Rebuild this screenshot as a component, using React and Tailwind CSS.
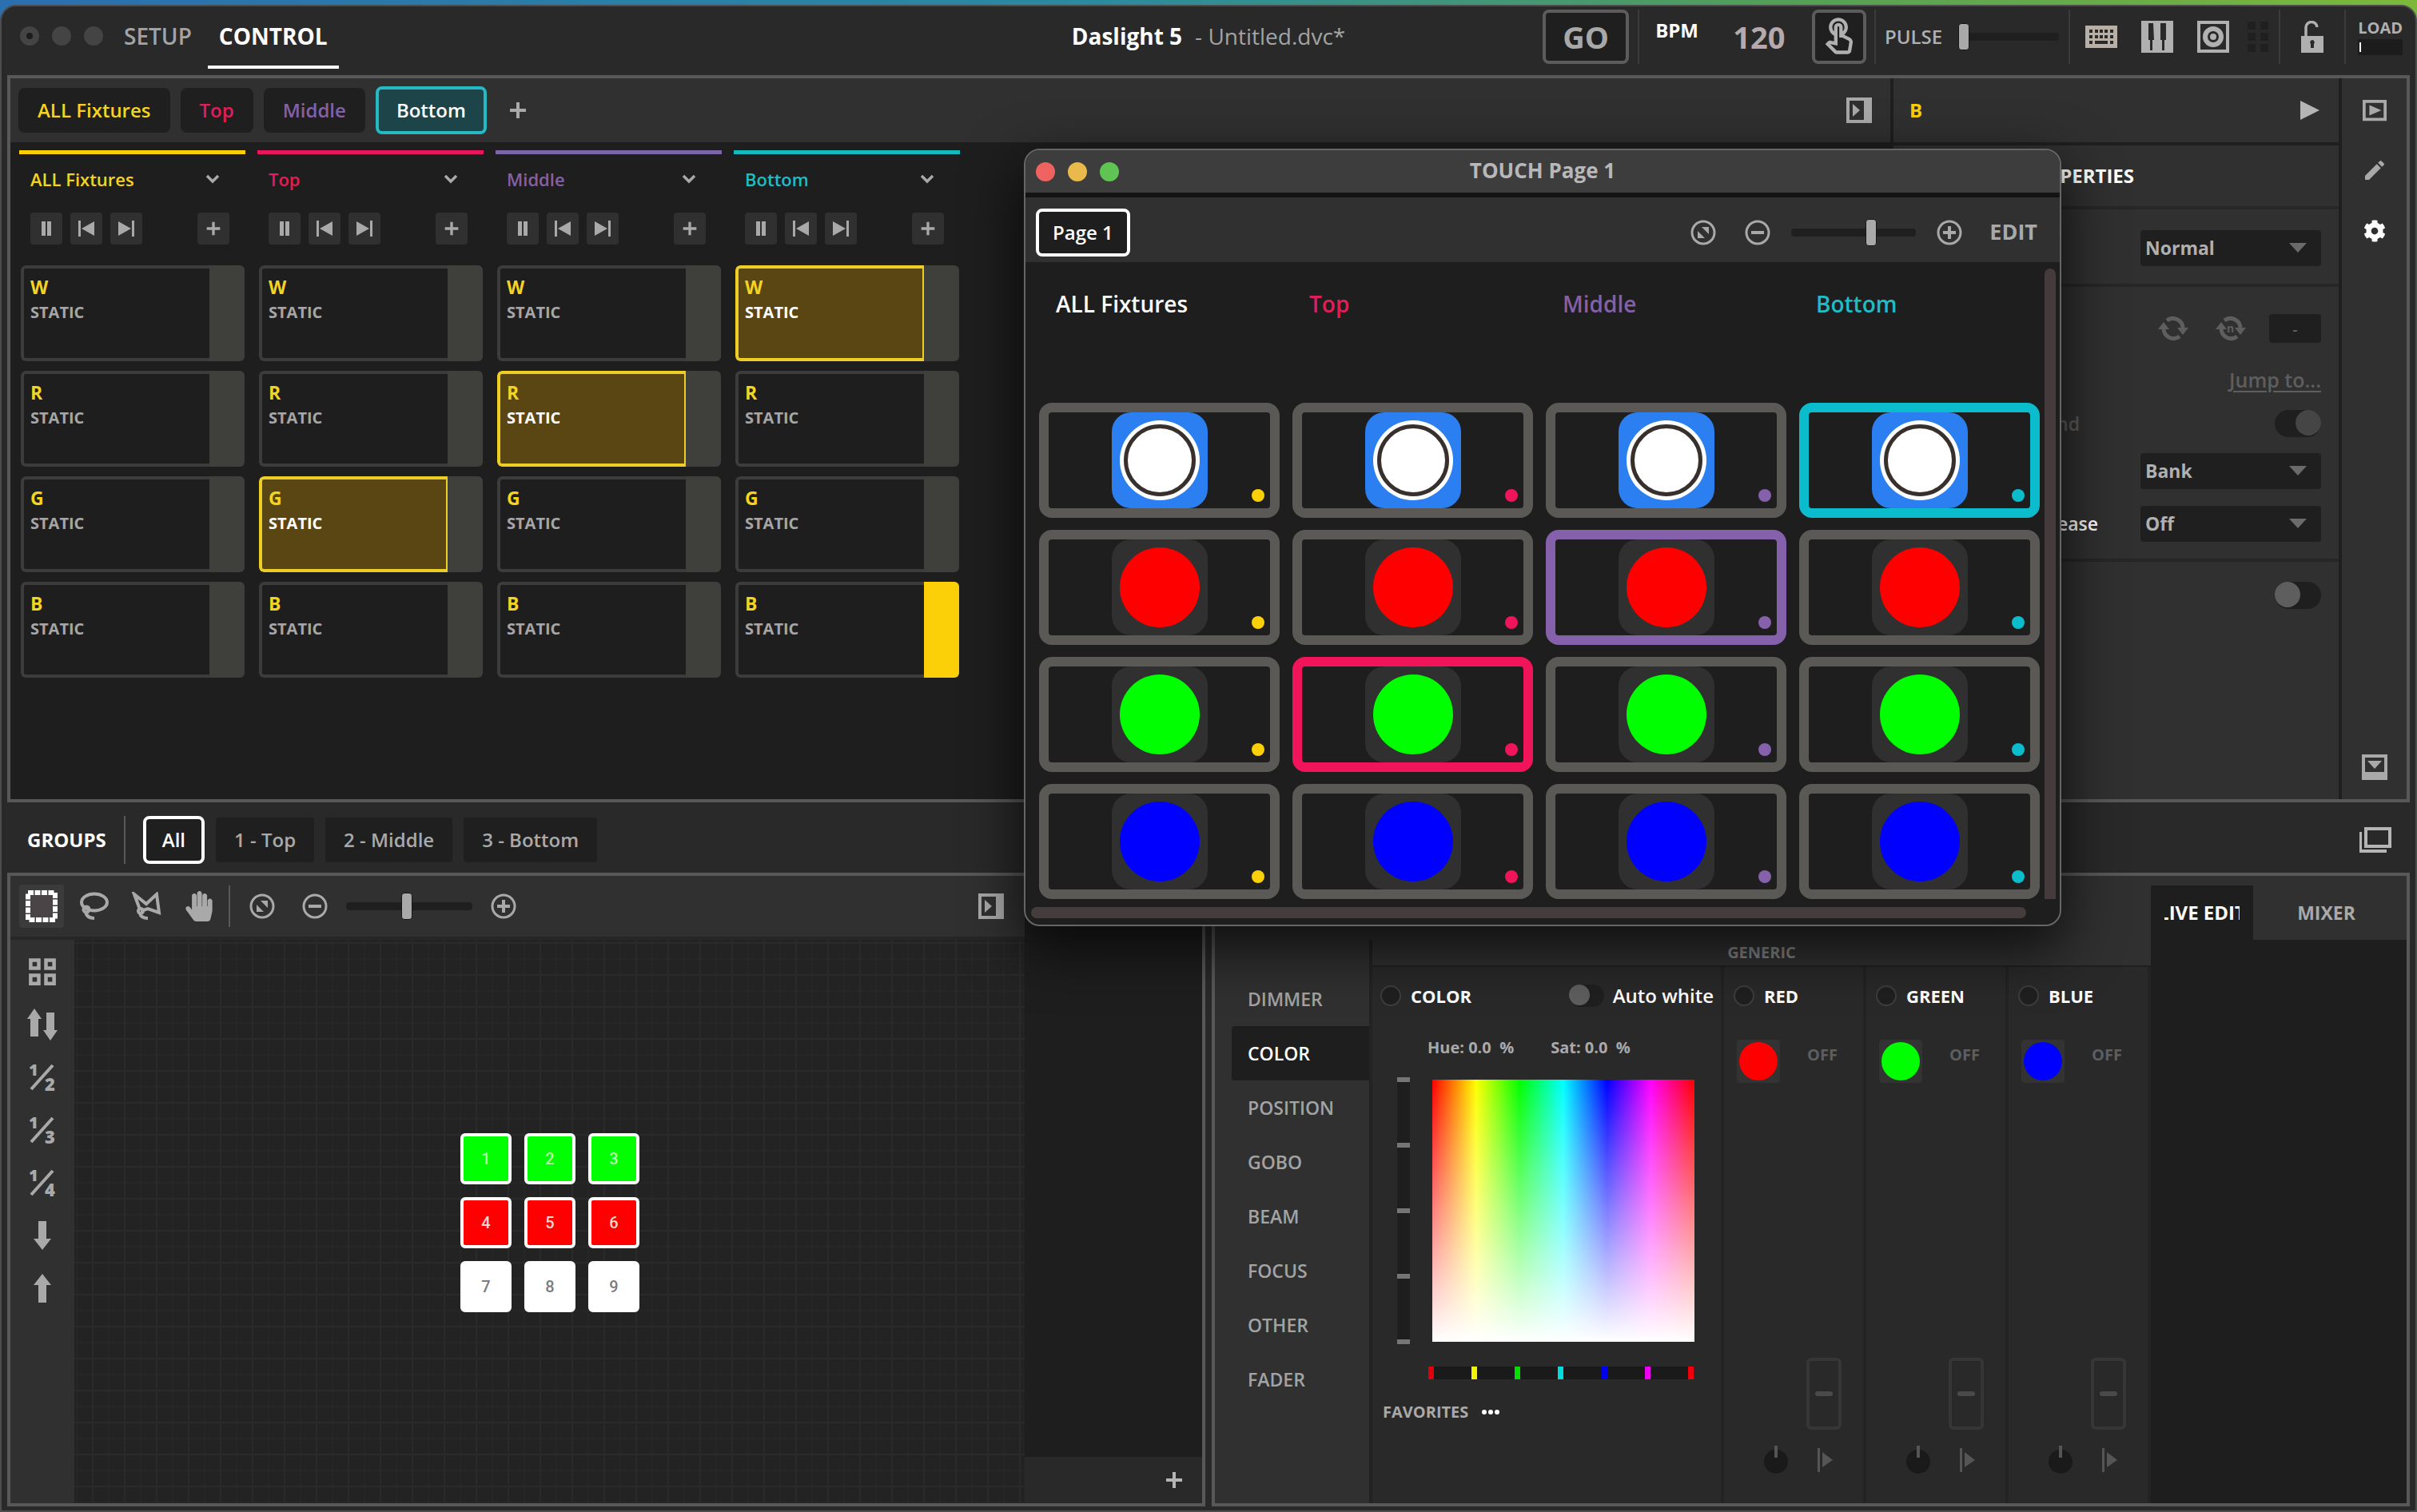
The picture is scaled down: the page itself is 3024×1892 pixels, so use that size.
import React, { useState } from 'react';
import clsx from 'clsx';
import { FaCog, FaHandPaper } from 'react-icons/fa';
import { MdEdit, MdOutlineTouchApp } from 'react-icons/md';

const BANKS = [
  { name: 'ALL Fixtures', text: 'text-[#f5d321]', bar: 'bg-[#fbd008]', dot: 'bg-[#fbd008]', ring: 'border-[#fbd008]' },
  { name: 'Top', text: 'text-[#e01e5a]', bar: 'bg-[#e8175d]', dot: 'bg-[#f0145a]', ring: 'border-[#f0145a]' },
  { name: 'Middle', text: 'text-[#8360a8]', bar: 'bg-[#7d66a8]', dot: 'bg-[#8560ab]', ring: 'border-[#8560ab]' },
  { name: 'Bottom', text: 'text-[#1fbcc4]', bar: 'bg-[#14b8bd]', dot: 'bg-[#0bbccd]', ring: 'border-[#0bbccd]' },
];

const SCENES = ['W', 'R', 'G', 'B'];

// scene index that is playing in each bank
const PLAYING = [-1, 2, 1, 0];

const SCENE_COLORS = ['bg-white', 'bg-[#ff0000]', 'bg-[#00ff00]', 'bg-[#0000ff]'];

const FIXTURES = [
  { id: 1, style: 'bg-[#00ff00] text-[#b4ffb4]' },
  { id: 2, style: 'bg-[#00ff00] text-[#b4ffb4]' },
  { id: 3, style: 'bg-[#00ff00] text-[#b4ffb4]' },
  { id: 4, style: 'bg-[#ff0000] text-[#ffd5d0]' },
  { id: 5, style: 'bg-[#ff0000] text-[#ffd5d0]' },
  { id: 6, style: 'bg-[#ff0000] text-[#ffd5d0]' },
  { id: 7, style: 'bg-white text-[#7c7c7c]' },
  { id: 8, style: 'bg-white text-[#7c7c7c]' },
  { id: 9, style: 'bg-white text-[#7c7c7c]' },
];

const CATEGORIES = ['DIMMER', 'COLOR', 'POSITION', 'GOBO', 'BEAM', 'FOCUS', 'OTHER', 'FADER'];

const CHANNELS = [
  { name: 'RED', color: 'bg-[#ff0000]' },
  { name: 'GREEN', color: 'bg-[#00ff00]' },
  { name: 'BLUE', color: 'bg-[#0000ff]' },
];

const HUE_TICKS = [
  'bg-[#e0000b]', 'bg-[#f4f400]', 'bg-[#00e000]', 'bg-[#00dcdc]',
  'bg-[#0000f0]', 'bg-[#f000f0]', 'bg-[#f0000b]',
];

/* ---------- Icons ---------- */

function Svg({ w = 32, h = w, box = '0 0 32 32', children }) {
  return (
    <svg width={w} height={h} viewBox={box} fill="currentColor" aria-hidden="true" className="flex-shrink-0">
      {children}
    </svg>
  );
}

const PlusIcon = ({ size = 24 }) => (
  <Svg w={size} box="0 0 24 24"><path d="M10 2h4v8h8v4h-8v8h-4v-8H2v-4h8z" /></Svg>
);

const PauseIcon = () => (
  <Svg w={24} box="0 0 24 24"><path d="M6 3h5v18H6zM13 3h5v18h-5z" /></Svg>
);

const PrevIcon = () => (
  <Svg w={24} box="0 0 24 24"><path d="M2 2h3v20H2zM22 3v18L6 12z" /></Svg>
);

const NextIcon = () => (
  <Svg w={24} box="0 0 24 24"><path d="M19 2h3v20h-3zM2 3v18l16-9z" /></Svg>
);

const ChevronIcon = () => (
  <Svg w={18} h={12} box="0 0 18 12">
    <path d="M2 2l7 7 7-7" fill="none" stroke="currentColor" strokeWidth="3.5" />
  </Svg>
);

const PanelRightIcon = () => (
  <Svg>
    <path fillRule="evenodd" d="M0 0h32v32H0zM4 4v24h18V4z" />
    <path d="M8 8l9 8-9 8z" />
  </Svg>
);

const PanelBottomIcon = () => (
  <Svg>
    <path fillRule="evenodd" d="M0 0h32v32H0zM4 4v18h24V4z" />
    <path d="M7 8h18l-9 10z" />
  </Svg>
);

const PlayBoxIcon = () => (
  <Svg w={30}>
    <path fillRule="evenodd" d="M0 2h32v28H0zM4 6v20h24V6z" />
    <path d="M9 9l16 7-16 7z" />
  </Svg>
);

const WindowsIcon = () => (
  <Svg w={40} h={32} box="0 0 40 32">
    <path fillRule="evenodd" d="M6 0h34v26H6zM10 4v18h26V4z" />
    <path d="M0 6h3v22h31v4H0z" />
  </Svg>
);

const FitIcon = () => (
  <Svg>
    <circle cx="16" cy="16" r="14" fill="none" stroke="currentColor" strokeWidth="3" />
    <path d="M14 9h9v9zM9 14v9h9z" />
  </Svg>
);

const ZoomOutIcon = () => (
  <Svg>
    <circle cx="16" cy="16" r="14" fill="none" stroke="currentColor" strokeWidth="3" />
    <path d="M8 14h16v4H8z" />
  </Svg>
);

const ZoomInIcon = () => (
  <Svg>
    <circle cx="16" cy="16" r="14" fill="none" stroke="currentColor" strokeWidth="3" />
    <path d="M14 8h4v6h6v4h-6v6h-4v-6H8v-4h6z" />
  </Svg>
);

const MarqueeIcon = () => (
  <Svg w={40} box="0 0 40 40">
    <rect x="5" y="5" width="30" height="30" fill="#4a4446" />
    <rect x="3" y="3" width="34" height="34" fill="none" stroke="#fff" strokeWidth="6" strokeDasharray="7 1.5" />
  </Svg>
);

const LassoIcon = () => (
  <Svg w={40} h={36} box="0 0 40 36">
    <g fill="none" stroke="currentColor" strokeWidth="4">
      <ellipse cx="21" cy="13" rx="16" ry="10.5" />
      <circle cx="11" cy="22" r="3.5" />
      <path d="M10 25c1 5 4 8 11 8" />
    </g>
  </Svg>
);

const PolyLassoIcon = () => (
  <Svg w={40} h={36} box="0 0 40 36">
    <g fill="none" stroke="currentColor" strokeWidth="4">
      <path d="M12 22L5 3l15 12L33 3l3 23-14-5-9 3" />
      <circle cx="13" cy="24" r="3" />
      <path d="M12 27c1 4 4 6 10 6" />
    </g>
  </Svg>
);

const GridIcon = () => (
  <Svg w={36}>
    <path fillRule="evenodd" d="M1 1h13v13H1zM5 5v5h5V5zM18 1h13v13H18zM22 5v5h5V5zM1 18h13v13H1zM5 22v5h5v-5zM18 18h13v13H18zM22 22v5h5v-5z" />
  </Svg>
);

const SwapIcon = () => (
  <Svg w={40} box="0 0 40 40">
    <path d="M10 0l9 13h-4v22H5V13H1zM30 40l-9-13h4V5h10v22h4z" />
  </Svg>
);

const DownIcon = () => (
  <Svg w={40} box="0 0 40 40"><path d="M15 2h10v22h6L20 38 9 24h6z" /></Svg>
);

const UpIcon = () => (
  <Svg w={40} box="0 0 40 40"><path d="M15 38h10V16h6L20 2 9 16h6z" /></Svg>
);

const FractionIcon = ({ n }) => (
  <Svg w={48} h={56} box="-4 -8 48 56">
    <path d="M33 5L6 35" stroke="currentColor" strokeWidth="4" />
    <text x="3" y="18" fontSize="20" fontWeight="800">1</text>
    <text x="23" y="37" fontSize="22" fontWeight="800">{n}</text>
  </Svg>
);

const KeyboardIcon = () => (
  <Svg w={40} h={28} box="0 0 40 28">
    <path
      fillRule="evenodd"
      d="M0 0h40v28H0zM5 5v4h4V5zM12 5v4h4V5zM18 5v4h4V5zM24 5v4h4V5zM31 5v4h4V5zM5 12v4h4v-4zM12 12v4h4v-4zM18 12v4h4v-4zM24 12v4h4v-4zM31 12v4h4v-4zM5 19v4h4v-4zM12 19v4h16v-4zM31 19v4h4v-4z"
    />
  </Svg>
);

const PianoIcon = () => (
  <Svg w={40} box="0 0 40 40">
    <path fillRule="evenodd" d="M0 0h40v40H0zM3 3v34h34V3z" />
    <path d="M3 3h6v21h2v13H3zM15 3h3v21h-2v0zM16 24V3h8v21h2v13H14V24zM31 3h6v34h-8V24h2z" />
  </Svg>
);

const TargetIcon = () => (
  <Svg w={40} box="0 0 40 40">
    <path fillRule="evenodd" d="M0 0h40v40H0zM4 4v32h32V4z" />
    <circle cx="20" cy="20" r="10" fill="none" stroke="currentColor" strokeWidth="6" />
    <circle cx="20" cy="20" r="4" />
  </Svg>
);

const DotsGridIcon = () => (
  <Svg w={28} h={40} box="0 0 28 40">
    <path d="M1 1h10v10H1zM17 1h10v10H17zM1 15h10v10H1zM17 15h10v10H17zM1 29h10v10H1zM17 29h10v10H17z" />
  </Svg>
);

const UnlockIcon = () => (
  <Svg w={30} h={40} box="0 0 30 40">
    <path d="M7 20V9a7 7 0 0 1 14-1" fill="none" stroke="currentColor" strokeWidth="3.5" />
    <path fillRule="evenodd" d="M1 19h28v21H1zM15 24a3 3 0 0 0-2 5v5h4v-5a3 3 0 0 0-2-5z" />
  </Svg>
);

const LoopIcon = ({ letter }) => (
  <Svg w={40} h={32} box="0 0 40 32">
    <g fill="none" stroke="currentColor" strokeWidth="5">
      <path d="M12 6a12.500 12.500 0 0 1 20 10" />
      <path d="M28 26A12.500 12.500 0 0 1 8 16" />
    </g>
    <path d="M25 15h14l-7 9zM1 17h14L8 8z" />
    {letter && <text x="15" y="21" fontSize="14" fontWeight="700">{letter}</text>}
  </Svg>
);

const StepIcon = () => (
  <Svg w={24} h={32} box="0 0 24 32"><path d="M2 1h3v30H2zM8 6l13 10L8 25z" /></Svg>
);

/* ---------- Small controls ---------- */

function ZoomSlider({ label, value, className }) {
  return (
    <input
      type="range"
      aria-label={label}
      defaultValue={value}
      className={clsx(
        'h-8 flex-shrink-0 appearance-none bg-transparent',
        '[&::-webkit-slider-runnable-track]:h-[10px] [&::-webkit-slider-runnable-track]:rounded-sm [&::-webkit-slider-runnable-track]:bg-[#1f1f1f]',
        '[&::-webkit-slider-thumb]:-mt-[12px] [&::-webkit-slider-thumb]:h-[34px] [&::-webkit-slider-thumb]:w-[14px] [&::-webkit-slider-thumb]:appearance-none [&::-webkit-slider-thumb]:rounded-sm [&::-webkit-slider-thumb]:border [&::-webkit-slider-thumb]:border-[#161616] [&::-webkit-slider-thumb]:bg-[#a9a9a9]',
        className,
      )}
    />
  );
}

function Toggle({ id, label, checked = false, dim = false, className }) {
  return (
    <input
      id={id}
      type="checkbox"
      aria-label={label}
      defaultChecked={checked}
      className={clsx(
        'h-[34px] w-[58px] flex-shrink-0 appearance-none rounded-full bg-[#1f1f1f] before:block before:rounded-full checked:before:ml-auto',
        dim ? 'before:bg-[#454545]' : 'before:bg-[#5e5e5e]',
        'before:h-[32px] before:w-[32px]',
        className,
      )}
    />
  );
}

function Dropdown({ label, value }) {
  return (
    <div className="relative h-[45px] w-[226px] flex-shrink-0">
      <select
        aria-label={label}
        className="h-full w-full appearance-none rounded bg-[#1f1f1f] pl-[6px] text-[23px] font-bold text-[#b0b0b0]"
      >
        <option>{value}</option>
      </select>
      <span className="pointer-events-none absolute right-[18px] top-[16px] text-[#6b6b6b]">
        <Svg w={22} h={12} box="0 0 22 12"><path d="M0 0h22L11 12z" /></Svg>
      </span>
    </div>
  );
}

const Divider = () => <span className="block h-[68px] w-[2px] flex-shrink-0 bg-[#3b3b3b]" />;

/* ---------- Title bar ---------- */

function TitleBar() {
  return (
    <header className="grid h-[86px] grid-cols-[1fr_auto_1fr] items-start px-[16px]">
      <div className="flex h-[78px] items-start">
        <div className="flex h-[74px] items-center gap-4">
          <button aria-label="Close" className="flex h-6 w-6 items-center justify-center rounded-full bg-[#444]">
            <span className="h-2 w-2 rounded-full bg-[#1c1c1c]" />
          </button>
          <button aria-label="Minimize" className="h-6 w-6 rounded-full bg-[#444]" />
          <button aria-label="Zoom" className="h-6 w-6 rounded-full bg-[#444]" />
        </div>
        <nav className="ml-3 flex h-[78px] text-[28px] leading-[74px]">
          <a href="#setup" className="px-[14px] font-semibold text-[#a3a3a3]">SETUP</a>
          <a href="#control" className="ml-[6px] border-b-4 border-white px-[14px] font-bold text-white">CONTROL</a>
        </nav>
      </div>

      <div className="flex h-[74px] items-center justify-center gap-[16px] text-[28px]">
        <h1 className="font-bold text-white">Daslight 5</h1>
        <span className="font-medium text-[#a3a3a3]">- Untitled.dvc*</span>
      </div>

      <div className="-mr-[7px] mt-1 flex h-[68px] items-center justify-end text-[#b0b0b0]">
        <button className="h-[68px] w-[108px] flex-shrink-0 rounded-lg border-4 border-[#5c5c5c] bg-[#1f1f1f] text-[38px] font-bold leading-none text-[#a8a8a8]">
          GO
        </button>
        <span className="ml-[11px]"><Divider /></span>
        <label htmlFor="bpm" className="mb-4 ml-[20px] text-[24px] font-bold text-white">BPM</label>
        <input id="bpm" defaultValue="120" className="ml-[34px] w-[84px] flex-shrink-0 bg-transparent text-center text-[38px] font-bold text-[#b5a9ad]" />
        <button aria-label="Tap tempo" className="ml-[24px] flex h-[68px] w-[68px] flex-shrink-0 items-center justify-center rounded-lg border-4 border-[#5c5c5c] bg-[#1f1f1f]">
          <MdOutlineTouchApp size={52} />
        </button>
        <span className="ml-[10px]"><Divider /></span>
        <span className="ml-[11px] text-[24px] font-semibold">PULSE</span>
        <ZoomSlider label="Pulse" value={0} className="ml-[20px] w-[126px]" />
        <span className="ml-[12px]"><Divider /></span>
        <button aria-label="Keyboard" className="ml-[19px] text-[#b8b0a6]"><KeyboardIcon /></button>
        <button aria-label="MIDI" className="ml-[30px]"><PianoIcon /></button>
        <button aria-label="DMX input" className="ml-[30px]"><TargetIcon /></button>
        <button aria-label="Controllers" className="ml-[22px] text-[#202020]"><DotsGridIcon /></button>
        <span className="ml-[12px]"><Divider /></span>
        <button aria-label="Unlock" className="ml-[25px]"><UnlockIcon /></button>
        <span className="ml-[25px]"><Divider /></span>
        <div className="ml-[15px] flex flex-col gap-[2px]">
          <span className="text-[20px] font-bold leading-6">LOAD</span>
          <span className="flex h-[20px] items-center bg-[#1c1c1c] pl-[2px]">
            <span className="h-[12px] w-[2px] bg-white" />
          </span>
        </div>
      </div>
    </header>
  );
}

/* ---------- Banks ---------- */

function BankTabs() {
  const [active, setActive] = useState('Bottom');
  return (
    <div className="flex h-[80px] flex-1 items-center bg-[#303030] pl-[10px] pr-[23px]">
      <div className="flex items-center gap-[13px] text-[24px] font-semibold">
        {BANKS.map((bank) => (
          <button
            key={bank.name}
            onClick={() => setActive(bank.name)}
            className={clsx(
              'rounded-lg',
              active === bank.name
                ? 'h-[60px] border-4 border-[#25b9c4] bg-[#1d4449] px-[22px] text-white'
                : ['h-[56px] bg-[#1f1f1f] px-[24px]', bank.text],
            )}
          >
            {bank.name}
          </button>
        ))}
        <button aria-label="Add bank" className="ml-[14px] text-[#a9a9a9]"><PlusIcon /></button>
      </div>
      <button aria-label="Collapse panel" className="ml-auto text-[#a9a9a9]"><PanelRightIcon /></button>
    </div>
  );
}

function TransportButton({ label, children }) {
  return (
    <button aria-label={label} className="flex h-10 w-10 items-center justify-center rounded bg-[#303030] text-[#a9a9a9]">
      {children}
    </button>
  );
}

function SceneCell({ scene, playing, level }) {
  return (
    <div className="flex h-[120px] overflow-hidden rounded-md">
      <button
        className={clsx(
          'flex flex-1 flex-col items-start rounded-l-md border-y-4 border-l-4 pl-[8px] pt-[6px] text-left',
          playing ? 'border-r-2 border-[#ecce24] bg-[#5a4612]' : 'border-[#3c3c3c] bg-[#1e1e1e]',
        )}
      >
        <span className="text-[23px] font-bold leading-[34px] text-[#f5d321]">{scene}</span>
        <span className={clsx('text-[20px] font-bold leading-[30px]', playing ? 'text-white' : 'text-[#a6a6a6]')}>
          STATIC
        </span>
      </button>
      <div className={clsx('w-[44px]', level ? 'bg-[#fbd008]' : 'bg-[#3f3f3c]')} />
    </div>
  );
}

function BankColumn({ bank, index }) {
  return (
    <section className="w-[283px]">
      <div className={clsx('h-[5px]', bank.bar)} />
      <div className="flex h-[62px] items-center justify-between pl-[14px] pr-[32px]">
        <h2 className={clsx('text-[22px] font-semibold', bank.text)}>{bank.name}</h2>
        <button aria-label={`${bank.name} menu`} className="text-[#a9a9a9]"><ChevronIcon /></button>
      </div>
      <div className="flex gap-[10px] pl-[14px] pr-[20px] pt-[11px]">
        <TransportButton label="Pause"><PauseIcon /></TransportButton>
        <TransportButton label="Previous"><PrevIcon /></TransportButton>
        <TransportButton label="Next"><NextIcon /></TransportButton>
        <span className="flex-1" />
        <TransportButton label="Add scene"><PlusIcon size={20} /></TransportButton>
      </div>
      <div className="flex flex-col gap-3 pl-[2px] pr-[1px] pt-[26px]">
        {SCENES.map((scene, row) => (
          <SceneCell
            key={scene}
            scene={scene}
            playing={PLAYING[index] === row && index > 0}
            level={index === 3 && row === 3}
          />
        ))}
      </div>
    </section>
  );
}

function PropertiesPanel() {
  return (
    <aside className="flex w-[565px] flex-shrink-0 flex-col border-x-4 border-[#1f1f1f] bg-[#303030] text-[24px] font-semibold">
      <div className="flex h-[84px] items-center justify-between border-b-4 border-[#1f1f1f] pl-[20px] pr-[24px]">
        <span className="text-[24px] font-bold text-[#fbd008]">B</span>
        <button aria-label="Play" className="text-[#b5b5b5]">
          <Svg w={24} box="0 0 24 24"><path d="M0 0l24 12L0 24z" /></Svg>
        </button>
      </div>
      <h2 className="h-[80px] border-b-4 border-[#262626] pr-[256px] text-right text-[24px] font-bold leading-[76px] text-white">
        PROPERTIES
      </h2>
      <div className="flex h-[97px] items-center justify-end border-b-4 border-[#262626] pr-[22px] pt-[4px]">
        <Dropdown label="Mode" value="Normal" />
      </div>
      <div className="flex h-[344px] flex-col border-b-4 border-[#262626] pr-[22px] pt-[34px]">
        <div className="flex h-[36px] items-center justify-end gap-[32px] text-[#5e5e5e]">
          <button aria-label="Loop"><LoopIcon /></button>
          <button aria-label="Loop count"><LoopIcon letter="n" /></button>
          <input aria-label="Repeat" defaultValue="-" className="-ml-[4px] h-[36px] w-[65px] rounded bg-[#1f1f1f] text-center text-[20px]" />
        </div>
        <a href="#jump" className="mt-[28px] self-end text-[25px] leading-[36px] text-[#5e5e5e] underline underline-offset-4">Jump to...</a>
        <div className="mt-[17px] flex h-[40px] items-center">
          <label htmlFor="end" className="w-[233px] text-right text-[23px] text-[#5e5e5e]">End</label>
          <Toggle id="end" label="End" checked dim className="ml-auto" />
        </div>
        <div className="mt-[17px] flex justify-end"><Dropdown label="Release mode" value="Bank" /></div>
        <div className="mt-[21px] flex items-center">
          <span className="w-[256px] text-right text-[23px] text-white">Release</span>
          <span className="ml-auto"><Dropdown label="Release" value="Off" /></span>
        </div>
      </div>
      <div className="flex justify-end pr-[22px] pt-[25px]">
        <Toggle label="Enable" />
      </div>
    </aside>
  );
}

function ControlPanel() {
  return (
    <section className="flex min-h-[910px] border-4 border-[#585858] bg-[#1e1e1e]">
      <div className="flex-1">
        <div className="flex"><BankTabs /></div>
        <div className="flex gap-[15px] pl-[11px] pt-[10px]">
          {BANKS.map((bank, i) => <BankColumn key={bank.name} bank={bank} index={i} />)}
        </div>
      </div>
      <PropertiesPanel />
      <nav className="flex w-[81px] flex-shrink-0 flex-col items-center bg-[#303030] pb-[24px] pt-[24px] text-[#a9a9a9]">
        <button aria-label="Preview" className="flex h-[32px] items-center"><PlayBoxIcon /></button>
        <button aria-label="Edit" className="mt-[43px]"><MdEdit size={32} /></button>
        <button aria-label="Settings" className="mt-[46px] text-white"><FaCog size={28} /></button>
        <button aria-label="Collapse" className="mt-auto"><PanelBottomIcon /></button>
      </nav>
    </section>
  );
}

/* ---------- Groups ---------- */

function GroupsBar() {
  const [group, setGroup] = useState('All');
  return (
    <div className="flex h-[88px] items-center pl-[25px] pr-[23px] pt-[6px] text-[24px] font-semibold">
      <h2 className="text-[24px] font-bold text-white">GROUPS</h2>
      <span className="ml-[22px] h-[60px] w-[2px] bg-[#585858]" />
      <div className="ml-[22px] flex items-center gap-[14px]">
        {['All', '1 - Top', '2 - Middle', '3 - Bottom'].map((name) => (
          <button
            key={name}
            onClick={() => setGroup(name)}
            className={clsx(
              'bg-[#1f1f1f]',
              group === name
                ? 'h-[60px] rounded-lg border-4 border-white px-[20px] text-white'
                : 'h-[56px] rounded px-[23px] text-[#a9a9a9]',
            )}
          >
            {name}
          </button>
        ))}
      </div>
      <button aria-label="Windows" className="ml-auto text-[#b5b5b5]"><WindowsIcon /></button>
    </div>
  );
}

/* ---------- Fixture view ---------- */

function FixturePanel() {
  return (
    <section className="flex w-[1499px] flex-shrink-0 flex-col border-4 border-[#585858] bg-[#1e1e1e]">
      <div className="flex flex-1">
        <div className="flex flex-1 flex-col">
          <div className="flex h-[80px] items-center border-b-4 border-[#262626] bg-[#303030] pl-[11px] pr-[26px] text-[#a9a9a9]">
            <button aria-label="Select" className="flex h-[54px] w-[56px] items-center justify-center rounded bg-[#3b3b3b]"><MarqueeIcon /></button>
            <button aria-label="Lasso" className="ml-[17px]"><LassoIcon /></button>
            <button aria-label="Polygon lasso" className="ml-[26px]"><PolyLassoIcon /></button>
            <button aria-label="Pan" className="ml-[27px]"><FaHandPaper size={38} /></button>
            <span className="ml-[18px] h-[52px] w-[2px] bg-[#585858]" />
            <button aria-label="Fit" className="ml-[24px]"><FitIcon /></button>
            <button aria-label="Zoom out" className="ml-[34px]"><ZoomOutIcon /></button>
            <ZoomSlider label="Zoom" value={48} className="ml-[23px] w-[158px]" />
            <button aria-label="Zoom in" className="ml-[23px]"><ZoomInIcon /></button>
            <button aria-label="Collapse panel" className="ml-auto"><PanelRightIcon /></button>
          </div>
          <div className="flex flex-1">
            <div className="flex w-[80px] flex-col items-center gap-[26px] bg-[#303030] pt-[20px] text-[#a9a9a9]">
              <button aria-label="Grid" className="flex h-10 items-center"><GridIcon /></button>
              <button aria-label="Invert"><SwapIcon /></button>
              <button aria-label="Every second" className="flex h-10 items-center"><FractionIcon n={2} /></button>
              <button aria-label="Every third" className="flex h-10 items-center"><FractionIcon n={3} /></button>
              <button aria-label="Every fourth" className="flex h-10 items-center"><FractionIcon n={4} /></button>
              <button aria-label="Next fixture"><DownIcon /></button>
              <button aria-label="Previous fixture"><UpIcon /></button>
            </div>
            <div className="flex-1 bg-[#232323] bg-[linear-gradient(#2a2a2a_2px,transparent_2px),linear-gradient(90deg,#2a2a2a_2px,transparent_2px),linear-gradient(#262626_2px,transparent_2px),linear-gradient(90deg,#262626_2px,transparent_2px)] bg-[length:40px_40px,40px_40px,20px_20px,20px_20px] bg-[position:22px_3px] pl-[483px] pt-[242px]">
              <div className="grid w-[224px] grid-cols-3 gap-4">
                {FIXTURES.map((fixture) => (
                  <button
                    key={fixture.id}
                    className={clsx("h-16 w-16 rounded-md border-4 border-white font-['Roboto',sans-serif] text-[20px] font-medium", fixture.style)}
                  >
                    {fixture.id}
                  </button>
                ))}
              </div>
            </div>
          </div>
        </div>
        <div className="flex w-[222px] flex-col justify-end bg-[#1e1e1e]">
          <div className="flex h-[58px] items-center justify-end bg-[#292929] pr-[23px] text-[#b5b5b5]">
            <button aria-label="Add"><PlusIcon /></button>
          </div>
        </div>
      </div>
    </section>
  );
}

/* ---------- Live edit ---------- */

function ChannelHeader({ name }) {
  return (
    <label className="flex items-center gap-[12px] text-[22px] font-bold text-white">
      <input type="radio" name={name} className="h-[26px] w-[26px] appearance-none rounded-full border-2 border-[#3d3d3d] bg-[#1f1f1f]" />
      {name}
    </label>
  );
}

function ColorPicker() {
  return (
    <div className="flex w-[440px] flex-shrink-0 flex-col border-r-4 border-[#232323] pl-[10px] pt-[20px]">
      <div className="flex h-[32px] items-center">
        <ChannelHeader name="COLOR" />
        <label className="ml-auto flex items-center gap-[11px] pr-[9px] text-[24px] font-semibold text-white">
          <input
            type="checkbox"
            className="h-[28px] w-[44px] appearance-none rounded-full bg-[#1f1f1f] before:block before:h-[26px] before:w-[26px] before:rounded-full before:bg-[#5e5e5e] checked:before:ml-auto"
          />
          Auto white
        </label>
      </div>
      <div className="mt-[34px] flex h-[30px] items-center gap-[46px] pl-[59px] text-[20px] font-bold text-[#a9a9a9]">
        <span className="whitespace-pre">Hue: 0.0  %</span>
        <span className="whitespace-pre">Sat: 0.0  %</span>
      </div>
      <div className="mt-[22px] flex pl-[21px]">
        <div className="flex h-[334px] w-[16px] flex-col justify-between bg-[#1e1e1e]">
          {[0, 1, 2, 3, 4].map((i) => <span key={i} className="h-[6px] bg-[#757575]" />)}
        </div>
        <div className="ml-[28px] mt-[3px] h-[328px] w-[328px] bg-[linear-gradient(to_bottom,transparent,white),linear-gradient(to_right,#f00,#ff0,#0f0,#0ff,#00f,#f0f,#f00)]" />
      </div>
      <div className="ml-[60px] mt-[28px] flex h-[16px] w-[332px] justify-between bg-[#1a1a1a]">
        {HUE_TICKS.map((tick, i) => <span key={i} className={clsx('w-[7px]', tick)} />)}
      </div>
      <div className="mt-[26px] flex items-center gap-4 pl-[3px]">
        <h3 className="text-[20px] font-bold text-[#a9a9a9]">FAVORITES</h3>
        <button aria-label="Favorites menu" className="text-white">
          <Svg w={24} h={8} box="0 0 24 8"><circle cx="4" cy="4" r="3" /><circle cx="12" cy="4" r="3" /><circle cx="20" cy="4" r="3" /></Svg>
        </button>
      </div>
    </div>
  );
}

function ChannelStrip({ channel }) {
  return (
    <div className="flex flex-1 flex-col border-r-4 border-[#232323] pl-[12px] pt-[20px]">
      <div className="flex h-[32px] items-center"><ChannelHeader name={channel.name} /></div>
      <div className="mt-[39px] flex items-start pl-[4px]">
        <button aria-label={`${channel.name} preset`} className="flex h-[54px] w-[54px] items-center justify-center rounded bg-[#333]">
          <span className={clsx('h-12 w-12 rounded-full', channel.color)} />
        </button>
        <span className="ml-[34px] mt-[4px] text-[20px] font-bold text-[#5e5e5e]">OFF</span>
      </div>
      <div className="mb-[36px] mr-[27px] mt-auto flex flex-col items-end">
        <div className="flex h-[90px] w-[44px] items-center justify-center rounded-md border-4 border-[#363636]">
          <span className="h-[6px] w-[22px] rounded-sm bg-[#4a4a4a]" />
        </div>
        <div className="mr-[8px] mt-[20px] flex items-center gap-[34px] text-[#555]">
          <Svg w={32} h={36} box="0 0 32 36">
            <circle cx="16" cy="20" r="15" fill="#1a1a1a" />
            <path d="M14 0h4v15h-4z" />
          </Svg>
          <button aria-label={`${channel.name} fan`}><StepIcon /></button>
        </div>
      </div>
    </div>
  );
}

function LiveEditPanel() {
  const [category, setCategory] = useState('COLOR');
  return (
    <section className="flex flex-1 flex-col border-4 border-[#585858] bg-[#1e1e1e]">
      <div className="flex h-[80px] items-end justify-end bg-[#303030]">
        <div className="flex h-[68px] text-[23px] font-bold">
          <button className="flex w-[128px] items-center justify-center bg-[#1e1e1e] text-white">
            <span className="flex w-[94px] justify-center overflow-hidden whitespace-nowrap text-[24px]">LIVE EDIT</span>
          </button>
          <button className="w-[192px] pr-[9px] text-[#a9a9a9]">MIXER</button>
        </div>
      </div>
      <div className="flex flex-1">
        <nav className="flex w-[193px] flex-col bg-[#303030] pl-[21px] pt-[40px]">
          {CATEGORIES.map((name) => (
            <button
              key={name}
              onClick={() => setCategory(name)}
              className={clsx(
                'h-[68px] rounded-l pl-[20px] text-left text-[23px] font-semibold',
                category === name ? 'bg-[#1e1e1e] text-white' : 'text-[#a3a3a3]',
              )}
            >
              {name}
            </button>
          ))}
        </nav>
        <div className="flex flex-1 flex-col border-l-4 border-[#232323] bg-[#292929]">
          <h2 className="h-[34px] border-b-2 border-[#1f1f1f] bg-[#303030] text-center text-[20px] font-bold leading-[32px] text-[#858585]">
            GENERIC
          </h2>
          <div className="flex flex-1">
            <ColorPicker />
            {CHANNELS.map((channel) => <ChannelStrip key={channel.name} channel={channel} />)}
          </div>
        </div>
        <div className="w-[320px] bg-[#1e1e1e]" />
      </div>
    </section>
  );
}

/* ---------- Floating touch window ---------- */

function TouchButton({ bank, row, active }) {
  return (
    <button
      aria-label={`${bank.name} ${SCENES[row]}`}
      className={clsx(
        'relative flex h-[144px] items-center justify-center rounded-2xl border-[12px] bg-[#1e1e1e]',
        active ? bank.ring : 'border-[#5a5955]',
      )}
    >
      <span
        className={clsx(
          'flex h-[120px] w-[120px] items-center justify-center rounded-[24px]',
          row === 0 ? 'bg-[#2b7ff0]' : 'bg-[#303030]',
        )}
      >
        <span className={clsx('flex h-[100px] w-[100px] items-center justify-center rounded-full', SCENE_COLORS[row])}>
          {row === 0 && <span className="h-[90px] w-[90px] rounded-full border-[5px] border-[#38302d]" />}
        </span>
      </span>
      <span className={clsx('absolute bottom-[8px] right-[7px] h-4 w-4 rounded-full', bank.dot)} />
    </button>
  );
}

function TouchWindow() {
  return (
    <section className="absolute left-[1281px] top-[186px] w-[1298px] overflow-hidden rounded-[20px] border-2 border-[#666] bg-[#1e1e1e] shadow-[0_24px_70px_4px_rgba(0,0,0,0.7)]">
      <div className="grid h-[59px] grid-cols-[1fr_auto_1fr] items-center border-b-[6px] border-[#141414] bg-[#3d3d3d] px-[13px]">
        <div className="flex gap-4">
          <button aria-label="Close" className="h-6 w-6 rounded-full bg-[#ee6360]" />
          <button aria-label="Minimize" className="h-6 w-6 rounded-full bg-[#e9b94b]" />
          <button aria-label="Zoom" className="h-6 w-6 rounded-full bg-[#60c454]" />
        </div>
        <h2 className="pb-[3px] text-[26px] font-bold leading-[36px] text-[#b8b8b8]">TOUCH Page 1</h2>
      </div>
      <div className="flex h-[81px] items-center bg-[#303030] pl-[13px] pr-[28px] pt-[6px] text-[#a9a9a9]">
        <button className="h-[60px] rounded-lg border-4 border-white bg-[#1e1e1e] px-[17px] text-[24px] font-semibold text-white">Page 1</button>
        <button aria-label="Fit" className="ml-auto"><FitIcon /></button>
        <button aria-label="Zoom out" className="ml-[36px]"><ZoomOutIcon /></button>
        <ZoomSlider label="Touch zoom" value={65} className="ml-[26px] w-[156px]" />
        <button aria-label="Zoom in" className="ml-[26px]"><ZoomInIcon /></button>
        <button className="ml-[34px] text-[27px] font-bold">EDIT</button>
      </div>
      <div className="flex">
        <div className="flex-1 pl-[17px] pt-[31px]">
          <div className="grid grid-cols-4 gap-4 pb-[103px] text-[28px] font-semibold leading-[42px]">
            {BANKS.map((bank, i) => (
              <h3 key={bank.name} className={clsx('pl-[21px]', i === 0 ? 'text-white' : bank.text)}>{bank.name}</h3>
            ))}
          </div>
          <div className="grid grid-cols-4 gap-x-4 gap-y-[15px]">
            {SCENES.map((scene, row) =>
              BANKS.map((bank, i) => (
                <TouchButton key={bank.name + scene} bank={bank} row={row} active={i > 0 && PLAYING[i] === row} />
              )),
            )}
          </div>
        </div>
        <div className="ml-[6px] mr-[5px] mt-[8px] w-[14px] rounded-t-full bg-[#453b3d]" />
      </div>
      <div className="mb-[8px] ml-[7px] mr-[42px] mt-[10px] h-[14px] rounded-full bg-[#443d3b]" />
    </section>
  );
}

export default function App() {
  return (
    <div className="relative flex min-h-screen flex-col bg-[linear-gradient(to_right,#2a6fb0,#2a8aa0_45%,#55a055_75%,#7cb83a)] pt-[6px] font-['Open_Sans',sans-serif]">
      <div className="flex flex-1 flex-col rounded-t-[20px] border-2 border-[#4d4d4d] bg-[#292929] px-[7px] pb-[5px]">
        <TitleBar />
        <main className="flex flex-1 flex-col">
          <ControlPanel />
          <GroupsBar />
          <div className="flex flex-1 gap-[8px]">
            <FixturePanel />
            <LiveEditPanel />
          </div>
        </main>
      </div>
      <TouchWindow />
    </div>
  );
}
